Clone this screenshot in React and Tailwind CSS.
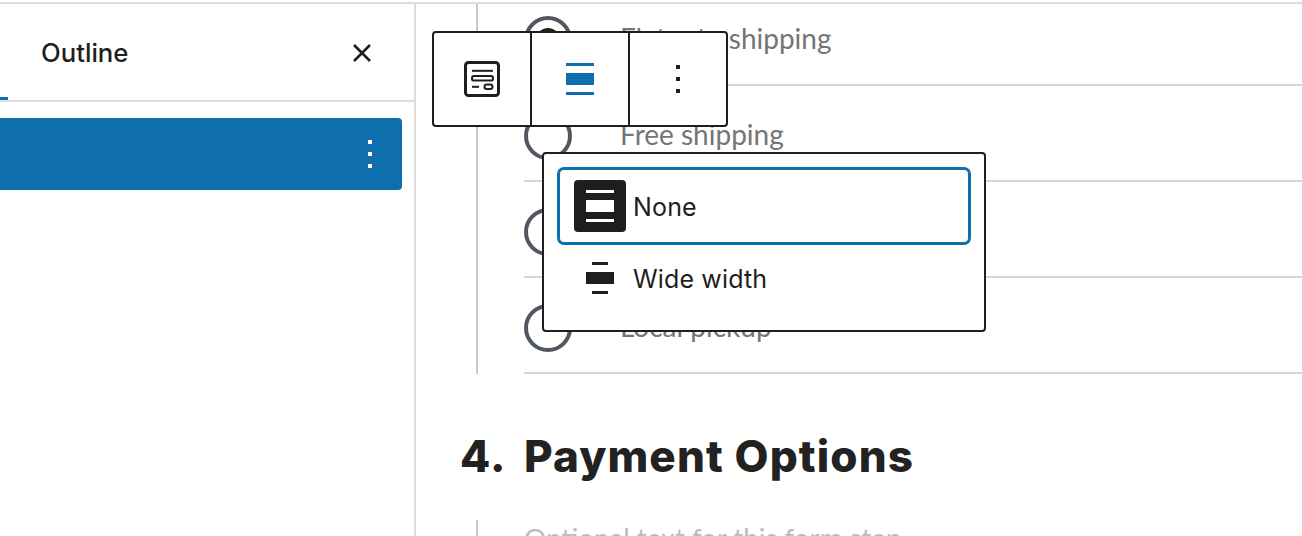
const uiFont = "font-['Inter',sans-serif]";

function Kebab({ className }) {
  return (
    <div className={`flex flex-col gap-2 w-1 ${className}`}>
      <span className="block w-1 h-1 bg-current" />
      <span className="block w-1 h-1 bg-current" />
      <span className="block w-1 h-1 bg-current" />
    </div>
  );
}

function Radio({ checked }) {
  return (
    <div className="w-12 h-12 rounded-full border-4 border-[#50575e] bg-white flex items-center justify-center shrink-0">
      {checked && <div className="w-6 h-6 rounded-full bg-[#1e1e1e]" />}
    </div>
  );
}

function Row({ label, checked }) {
  return (
    <div className="h-[96px] border-b-2 border-[#d5d5d5] flex items-center gap-[48px] pt-[5px]">
      <Radio checked={checked} />
      <span className="font-['Lato',sans-serif] text-[28px] leading-none text-[#757575] -mt-1">{label}</span>
    </div>
  );
}

function AlignIcon({ color }) {
  return (
    <svg width="28" height="32" viewBox="0 0 28 32" className="block">
      <rect x="0" y="0" width="28" height="3" fill={color} />
      <rect x="0" y="10" width="28" height="12" fill={color} />
      <rect x="0" y="29" width="28" height="3" fill={color} />
    </svg>
  );
}

function WideIcon() {
  return (
    <svg width="28" height="32" viewBox="0 0 28 32" className="block">
      <rect x="6" y="0" width="16" height="3" fill="#1e1e1e" />
      <rect x="0" y="10" width="28" height="12" fill="#1e1e1e" />
      <rect x="6" y="29" width="16" height="3" fill="#1e1e1e" />
    </svg>
  );
}

export default function App() {
  return (
    <div className={`relative w-[1302px] h-[536px] overflow-hidden bg-white pt-0.5 ${uiFont}`}>
      <div className="flex h-full border-t-2 border-[#dddddd]">
        {/* Sidebar */}
        <aside className="w-[416px] shrink-0 border-r-2 border-[#dddddd] flex flex-col">
          <div className="h-[98px] shrink-0 border-b-2 border-[#dddddd] flex">
            <div className="w-2 h-[3px] self-end bg-[#0f6fae]" />
            <div className="flex-1 flex items-center justify-between pl-[33px] pr-[43px] pt-px">
              <span className="text-[25.7px] leading-none font-medium text-[#1e1e1e]">Outline</span>
              <svg width="18" height="18" viewBox="0 0 18 18" className="block">
                <path d="M1 1 L17 17 M17 1 L1 17" stroke="#1e1e1e" strokeWidth="2.6" fill="none" />
              </svg>
            </div>
          </div>
          <div className="mt-4 w-[402px] h-[72px] bg-[#0f6fae] rounded-r flex items-center justify-end pr-[30px] text-white">
            <Kebab />
          </div>
        </aside>

        {/* Canvas */}
        <main className="flex-1 min-w-0 overflow-hidden pl-[46px]">
          <div className="w-[840px] h-[370px] ml-[14px] border-l-2 border-[#c8c8c8] overflow-hidden pl-[46px]">
            <div className="-mt-[14px] w-[800px]">
              <Row label="Flat rate shipping" checked />
              <Row label="Free shipping" />
              <Row label="Pickup" />
              <Row label="Local pickup" />
            </div>
          </div>
          <h2 className="mt-[54px] -ml-[2px] flex font-['Inter',sans-serif] font-extrabold text-[44px] leading-[56px] tracking-[1.1px] text-[#222222]">
            <span className="w-[64px]">4.</span>
            <span>Payment Options</span>
          </h2>
          <div className="mt-[36px] ml-[14px] h-[20px] border-l-2 border-[#c8c8c8] pl-[46px] pt-[4px]">
            <span className="block font-['Lato',sans-serif] text-[27.7px] leading-none text-[#bbbbbb] whitespace-nowrap">Optional text for this form step</span>
          </div>
        </main>
      </div>

      {/* Block toolbar */}
      <div className="absolute left-[432px] top-[31px] flex h-[96px] border-2 border-[#1e1e1e] rounded bg-white">
        <div className="w-[96px] flex items-center justify-center">
          <svg width="36" height="36" viewBox="0 0 36 36" className="block">
            <rect x="1.5" y="1.5" width="33" height="33" rx="3" fill="none" stroke="#1e1e1e" strokeWidth="3" />
            <rect x="8" y="8.8" width="21" height="2" fill="#1e1e1e" />
            <rect x="8" y="15" width="21" height="4.6" rx="2.2" fill="none" stroke="#1e1e1e" strokeWidth="2" />
            <rect x="8" y="24.8" width="7" height="2" fill="#1e1e1e" />
            <rect x="20.5" y="23.5" width="8" height="4.5" rx="2.2" fill="none" stroke="#1e1e1e" strokeWidth="2" />
          </svg>
        </div>
        <div className="w-[98px] border-l-2 border-[#1e1e1e] flex items-center justify-center">
          <AlignIcon color="#0f6fae" />
        </div>
        <div className="w-[98px] border-l-2 border-[#1e1e1e] flex items-center justify-center text-[#1e1e1e]">
          <Kebab />
        </div>
      </div>

      {/* Dropdown */}
      <div className="absolute left-[542px] top-[152px] w-[444px] h-[180px] border-2 border-[#1e1e1e] rounded bg-white p-4 flex flex-col">
        <div className="h-[72px] flex items-center pl-[14px] gap-[7px] rounded-sm outline-[3px] outline-solid outline-[#0f6fae]">
          <div className="w-[52px] h-[52px] rounded bg-[#1e1e1e] flex items-center justify-center">
            <AlignIcon color="#ffffff" />
          </div>
          <span className="text-[25px] leading-none tracking-[0.15px] text-[#1e1e1e] pt-0.5">None</span>
        </div>
        <div className="h-[72px] flex items-center pl-[14px] gap-[7px]">
          <div className="w-[52px] h-[52px] flex items-center justify-center">
            <WideIcon />
          </div>
          <span className="text-[25px] leading-none tracking-[0.15px] text-[#1e1e1e] pt-0.5">Wide width</span>
        </div>
      </div>
    </div>
  );
}
